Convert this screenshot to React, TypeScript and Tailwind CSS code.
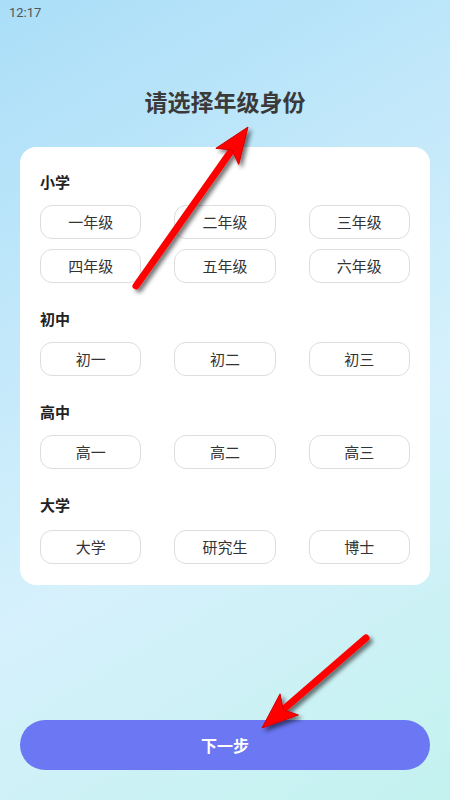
import { useState } from "react";

const groups = [
  { title: "小学", items: ["一年级", "二年级", "三年级", "四年级", "五年级", "六年级"] },
  { title: "初中", items: ["初一", "初二", "初三"] },
  { title: "高中", items: ["高一", "高二", "高三"] },
  { title: "大学", items: ["大学", "研究生", "博士"] },
];

function Arrow({ x1, y1, x2, y2 }: { x1: number; y1: number; x2: number; y2: number }) {
  const dx = x2 - x1;
  const dy = y2 - y1;
  const len = Math.sqrt(dx * dx + dy * dy);
  const ux = dx / len;
  const uy = dy / len;
  const hl = 36;
  const hw = 14;
  const bx = x2 - ux * hl;
  const by = y2 - uy * hl;
  const lx = bx - uy * hw;
  const ly = by + ux * hw;
  const rx = bx + uy * hw;
  const ry = by - ux * hw;
  const sx = x2 - ux * (hl - 8);
  const sy = y2 - uy * (hl - 8);
  return (
    <g filter="url(#shadow)">
      <line x1={x1} y1={y1} x2={sx} y2={sy} stroke="#ff0000" strokeWidth={7} strokeLinecap="round" />
      <polygon points={`${x2},${y2} ${lx},${ly} ${sx},${sy} ${rx},${ry}`} fill="#ff0000" stroke="#d00000" strokeWidth={1} />
    </g>
  );
}

export default function App() {
  const [picked, setPicked] = useState("");

  return (
    <div
      className="relative w-[450px] h-[800px] overflow-hidden bg-[linear-gradient(150deg,#aadef8_0%,#c4e9fa_35%,#d6f1fc_60%,#c3f2ef_100%)]"
      style={{ fontFamily: '"Noto Sans CJK SC", "Noto Sans", Roboto, sans-serif' }}
    >
      <div className="h-[26px] pl-[9px] pt-[3px] text-[13px] text-[#555] leading-[20px]" style={{ fontFamily: "Roboto, sans-serif" }}>
        12:17
      </div>

      <h1 className="mt-[58px] text-center text-[23px] font-bold leading-[34px] text-[#3a3a3a]">请选择年级身份</h1>

      <div className="mx-[20px] mt-[29px] rounded-[16px] bg-white px-[20px] pt-[24px] pb-[21px]">
        {groups.map((g, gi) => (
          <div key={g.title} className={gi > 0 ? "mt-[25px]" : ""}>
            <h2 className="text-[15px] font-bold leading-[22px] text-[#222]">{g.title}</h2>
            <div className={"grid grid-cols-3 gap-x-[33px] gap-y-[10px] " + (gi === 3 ? "mt-[14px]" : "mt-[12px]")}>
              {g.items.map((it) => (
                <button
                  key={it}
                  onClick={() => setPicked(it)}
                  className={
                    "h-[34px] rounded-[12px] border text-[15px] text-[#333] " +
                    (picked === it ? "border-[#6b77f3] bg-[#eef0ff]" : "border-[#dddddd] bg-white")
                  }
                >
                  {it}
                </button>
              ))}
            </div>
          </div>
        ))}
      </div>

      <button className="absolute left-[20px] top-[720px] h-[50px] w-[410px] rounded-full bg-[#6b77f3] text-[16px] font-bold text-white">
        下一步
      </button>

      <svg className="pointer-events-none absolute inset-0" width={450} height={800}>
        <defs>
          <filter id="shadow" x="-20%" y="-20%" width="140%" height="140%">
            <feDropShadow dx="3" dy="3" stdDeviation="2" floodColor="#000" floodOpacity="0.55" />
          </filter>
        </defs>
        <Arrow x1={136} y1={286} x2={248} y2={127} />
        <Arrow x1={366} y1={638} x2={262} y2={728} />
      </svg>
    </div>
  );
}
